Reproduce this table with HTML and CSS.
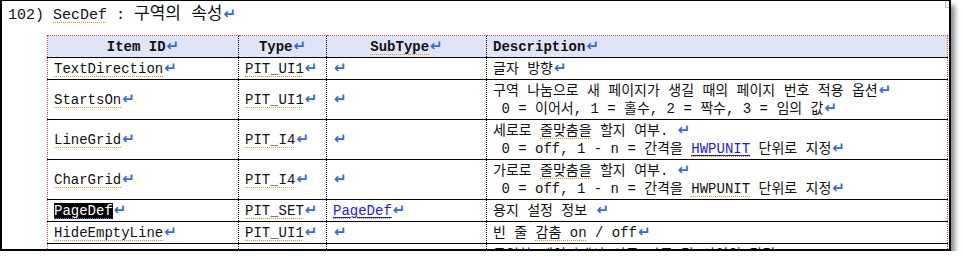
FILE: index.html
```html
<!DOCTYPE html>
<html lang="ko">
<head>
  <meta charset="UTF-8">
  <title>SecDef : 구역의 속성</title>
  <link rel="stylesheet" href="styles.css">
</head>
<body>
  <div class="page">
    <p class="title">102) <span class="spell">SecDef</span> : <span class="ko">구역의 속성</span><i class="pm">↵</i></p>

    <table class="props">
      <colgroup>
        <col class="c-id">
        <col class="c-type">
        <col class="c-sub">
        <col class="c-desc">
      </colgroup>
      <thead>
        <tr>
          <th>Item ID<i class="pm">↵</i></th>
          <th>Type<i class="pm">↵</i></th>
          <th><span class="spell">SubType</span><i class="pm">↵</i></th>
          <th class="desc">Description<i class="pm">↵</i></th>
        </tr>
      </thead>
      <tbody>
        <tr>
          <td><span class="spell">TextDirection</span><i class="pm">↵</i></td>
          <td><span class="spell">PIT_UI1</span><i class="pm">↵</i></td>
          <td><i class="pm">↵</i></td>
          <td class="desc">글자 방향<i class="pm">↵</i></td>
        </tr>
        <tr>
          <td><span class="spell">StartsOn</span><i class="pm">↵</i></td>
          <td><span class="spell">PIT_UI1</span><i class="pm">↵</i></td>
          <td><i class="pm">↵</i></td>
          <td class="desc">구역 나눔으로 새 페이지가 생길 때의 페이지 번호 적용 옵션<i class="pm">↵</i><br>&nbsp;0 = 이어서, 1 = 홀수, 2 = 짝수, 3 = 임의 값<i class="pm">↵</i></td>
        </tr>
        <tr>
          <td><span class="spell">LineGrid</span><i class="pm">↵</i></td>
          <td><span class="spell">PIT_I4</span><i class="pm">↵</i></td>
          <td><i class="pm">↵</i></td>
          <td class="desc">세로로 <span class="spell">줄맞춤을</span> 할지 여부.&nbsp;<i class="pm">↵</i><br>&nbsp;0 = off, 1 - n = 간격을 <a class="link"><span class="spell">HWPUNIT</span></a> 단위로 지정<i class="pm">↵</i></td>
        </tr>
        <tr>
          <td><span class="spell">CharGrid</span><i class="pm">↵</i></td>
          <td><span class="spell">PIT_I4</span><i class="pm">↵</i></td>
          <td><i class="pm">↵</i></td>
          <td class="desc">가로로 <span class="spell">줄맞춤을</span> 할지 여부.&nbsp;<i class="pm">↵</i><br>&nbsp;0 = off, 1 - n = 간격을 <span class="spell">HWPUNIT</span> 단위로 지정<i class="pm">↵</i></td>
        </tr>
        <tr>
          <td><span class="sel">PageDef</span><i class="pm">↵</i></td>
          <td><span class="spell">PIT_SET</span><i class="pm">↵</i></td>
          <td><a class="link"><span class="spell">PageDef</span></a><i class="pm">↵</i></td>
          <td class="desc">용지 설정 정보&nbsp;<i class="pm">↵</i></td>
        </tr>
        <tr>
          <td><span class="spell">HideEmptyLine</span><i class="pm">↵</i></td>
          <td><span class="spell">PIT_UI1</span><i class="pm">↵</i></td>
          <td><i class="pm">↵</i></td>
          <td class="desc">빈 줄 <span class="spell">감춤 on</span> / off<i class="pm">↵</i></td>
        </tr>
        <tr class="cut">
          <td><i class="pm">↵</i></td>
          <td><i class="pm">↵</i></td>
          <td></td>
          <td class="desc">동일한 페이지에서 서로 다른 단 사이의 간격<i class="pm">↵</i></td>
        </tr>
      </tbody>
    </table>
  </div>
</body>
</html>
```

FILE: styles.css
```css
body {
  margin: 0;
  background: #fff;
  font-family: "Liberation Mono", "Noto Sans CJK KR", monospace;
  color: #111;
}
.page {
  position: relative;
  width: 947px;
  height: 248px;
  border-style: solid;
  border-color: #000;
  border-width: 1px 2px 2px 2px;
  box-shadow: 4px 5px 5px rgba(0,0,0,0.45);
  overflow: hidden;
  background: #fff;
}
/* corner mark of the text area */
.page::after {
  content: "";
  position: absolute;
  top: 0;
  right: 0;
  width: 3px;
  height: 6px;
  border-left: 1px solid #c4c4c4;
  border-bottom: 1px solid #c4c4c4;
}
.title {
  margin: 0;
  height: 34px;
  box-sizing: border-box;
  padding: 4px 0 0 6px;
  font-size: 15px;
  line-height: 20px;
}
.title .ko {
  font-size: 17px;
}
.pm {
  font-style: normal;
  font-family: "DejaVu Sans", sans-serif;
  font-weight: bold;
  font-size: 15px;
  line-height: 1;
  color: #3d67d6;
  margin-left: 1px;
}
.spell {
  text-decoration: underline dotted #f0901a;
  text-decoration-thickness: 1px;
  text-underline-offset: 3px;
}
.link {
  color: #1c1ce0;
  text-decoration: underline solid #1c1ce0;
  text-underline-offset: 2px;
}
.sel {
  background: #000;
  color: #fff;
  text-decoration: underline dotted #4a7be8;
  text-underline-offset: 3px;
}
.props {
  margin-left: 45px;
  width: 900px;
  border-collapse: collapse;
  table-layout: fixed;
  font-size: 14px;
}
.c-id { width: 191px; }
.c-type { width: 88px; }
.c-sub { width: 160px; }
.c-desc { width: 461px; }
.props th,
.props td {
  padding: 2px 6px 1px;
  line-height: 18px;
  border-left: 1px dotted #000;
  border-top: 1px solid #000;
  vertical-align: middle;
  text-align: left;
  white-space: nowrap;
}
.props tr > :first-child {
  border-left: 1px dotted #ff3838;
}
.props tr > :last-child {
  border-right: 1px dotted #ff3838;
}
.props thead th {
  border-top: 1px dotted #ff3838;
  background: #dfe4f7;
  text-align: center;
}
.props thead th.desc {
  text-align: left;
}
.props td.desc {
  vertical-align: top;
}
.props tr.cut td {
  vertical-align: top;
}
.props tr.cut td:first-child {
  padding-left: 112px;
}
.props tr.cut td:nth-child(2) {
  padding-left: 44px;
}
```
